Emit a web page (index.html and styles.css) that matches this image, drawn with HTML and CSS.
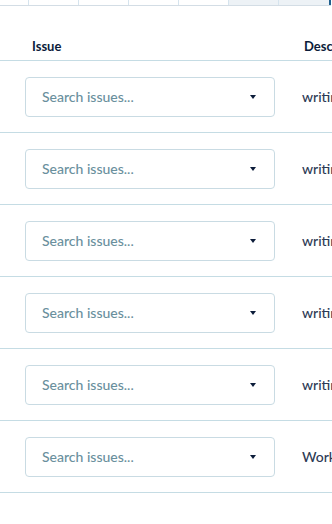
FILE: index.html
```html
<!DOCTYPE html>
<html lang="en">
<head>
  <meta charset="UTF-8" />
  <title>Issues</title>
  <meta name="viewport" content="width=device-width, initial-scale=1.0" />
  <link rel="stylesheet" href="styles.css">
</head>
<body>
  <div class="strip">
    <div class="strip-cell first"></div>
    <div class="strip-cell"></div>
    <div class="strip-cell"></div>
    <div class="strip-cell"></div>
    <div class="strip-cell"></div>
    <div class="strip-cell shaded"></div>
    <div class="strip-cell shaded last"></div>
  </div>

  <div class="table">
    <div class="row head">
      <div class="col-issue">Issue</div>
      <div class="col-desc">Description</div>
    </div>
    <div class="row">
      <div class="col-issue"><div class="select"><span>Search issues...</span><span class="caret"></span></div></div>
      <div class="col-desc">writing tests</div>
    </div>
    <div class="row">
      <div class="col-issue"><div class="select"><span>Search issues...</span><span class="caret"></span></div></div>
      <div class="col-desc">writing tests</div>
    </div>
    <div class="row">
      <div class="col-issue"><div class="select"><span>Search issues...</span><span class="caret"></span></div></div>
      <div class="col-desc">writing tests</div>
    </div>
    <div class="row">
      <div class="col-issue"><div class="select"><span>Search issues...</span><span class="caret"></span></div></div>
      <div class="col-desc">writing tests</div>
    </div>
    <div class="row">
      <div class="col-issue"><div class="select"><span>Search issues...</span><span class="caret"></span></div></div>
      <div class="col-desc">writing tests</div>
    </div>
    <div class="row">
      <div class="col-issue"><div class="select"><span>Search issues...</span><span class="caret"></span></div></div>
      <div class="col-desc">Working on</div>
    </div>
  </div>
</body>
</html>
```

FILE: styles.css
```css
body {
  margin: 0;
  background: #ffffff;
  font-family: Lato, "Open Sans", sans-serif;
  overflow: hidden;
  width: 332px;
}

.strip {
  display: flex;
  height: 5px;
  border-bottom: 1px solid #d3dde5;
  width: 331px;
}

.strip-cell {
  width: 49px;
  border-right: 1px solid #d6e4ee;
  flex-shrink: 0;
}

.strip-cell.first {
  width: 28px;
}

.strip-cell.shaded {
  background: #edf2f6;
}

.strip-cell.last {
  width: 50px;
  border-right: 2px solid #1f5f8e;
}

.table {
  width: 420px;
}

.row {
  display: flex;
  align-items: center;
  height: 71px;
  border-bottom: 1px solid #c5dce4;
}

.row.head {
  height: 54px;
  font-size: 13px;
  font-weight: bold;
  color: #0c1c3a;
  align-items: flex-start;
}

.row.head .col-issue {
  padding: 32px 0 0 32px;
  width: 270px;
}

.row.head .col-desc {
  font-size: 13px;
  font-weight: bold;
  color: #0c1c3a;
  padding-top: 32px;
  padding-left: 2px;
}

.col-issue {
  width: 277px;
  padding-left: 25px;
  flex-shrink: 0;
}

.col-desc {
  font-size: 14px;
  font-weight: 500;
  color: #2d3b55;
  white-space: nowrap;
}

.select {
  box-sizing: border-box;
  width: 250px;
  height: 40px;
  margin-top: 1px;
  border: 1px solid #c9dbe3;
  border-radius: 4px;
  display: flex;
  align-items: center;
  justify-content: space-between;
  padding: 0 18px 0 16px;
  font-size: 14px;
  font-weight: 500;
  color: #6a909d;
}

.select span:first-child {
  margin-top: -1px;
}

.caret {
  width: 0;
  height: 0;
  border-left: 3px solid transparent;
  border-right: 3px solid transparent;
  border-top: 4px solid #0c1c3a;
}
```
